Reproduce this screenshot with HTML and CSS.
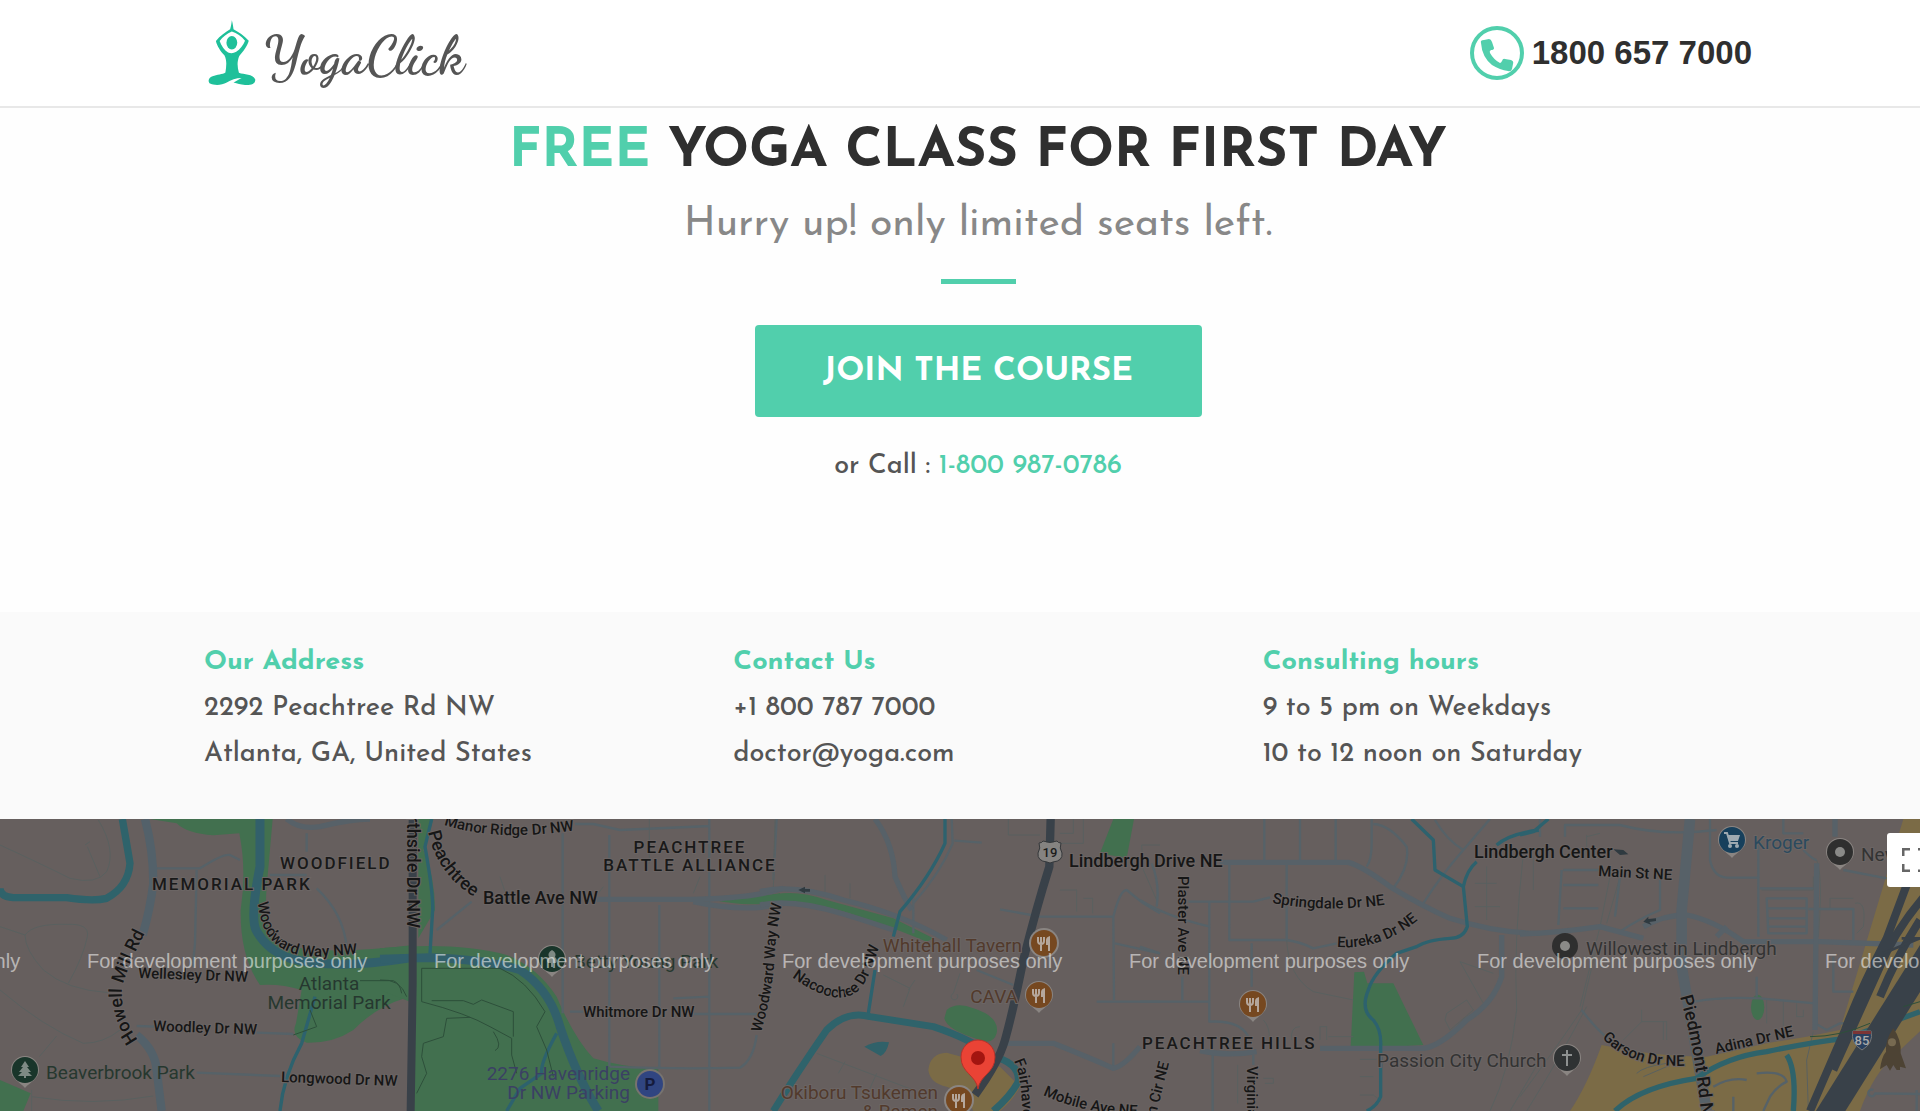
FILE: index.html
```html
<!DOCTYPE html>
<html lang="en">
<head>
<meta charset="utf-8">
<meta name="viewport" content="width=device-width, initial-scale=1">
<title>YogaClick</title>
<link rel="stylesheet" href="styles.css">
</head>
<body>
<div class="page">
  <header class="site-header">
    <div class="container header-row">
      <a class="logo" href="#" aria-label="YogaClick">
        <svg class="logo-mark" viewBox="56 60 141 195" aria-hidden="true">
          <path fill="#1fc09a" fill-rule="evenodd" d="M126 61 C129 72 130 80 131 87 C145 95 163 106 176 121 C172 137 159 153 148 166 C141 182 142 200 147 216 C162 222 188 219 195 235 C197 250 181 253 165 252 C151 252 143 247 131 245 C138 240 148 235 155 231 C139 231 123 237 111 245 C95 254 73 254 60 247 C54 239 59 229 69 226 C82 221 99 221 107 215 C110 197 112 179 104 164 C93 153 82 137 79 122 C91 106 108 95 121 87 C124 77 125 70 126 61 Z M126 94 C112 100 99 110 90 122 C95 136 104 149 115 156 Q127 161 139 154 C150 146 160 135 165 121 C154 108 141 99 126 94 Z"/>
          <ellipse cx="126" cy="127" rx="16" ry="20" fill="#1fc09a"/>
        </svg>
        <span class="logo-text">YogaClick</span>
      </a>
      <a class="phone" href="tel:18006577000">
        <svg class="phone-icon" viewBox="0 0 54 54" aria-hidden="true">
          <circle cx="27" cy="27" r="25" fill="none" stroke="#51cfac" stroke-width="4"/>
          <path fill="#51cfac" d="M11 17 Q10 14 14 14 L19 13 Q21 13 22 16 L24 22 Q24 24 21 24 Q19 25 20 27 Q24 34 30 37 Q31 37 32 35 Q33 32 35 33 L41 34 Q44 35 43 38 L42 43 Q41 46 38 45 Q30 44 22 39 Q12 31 11 17 Z"/>
        </svg>
        <span>1800 657 7000</span>
      </a>
    </div>
  </header>

  <main>
    <section class="offer">
      <h1 class="offer-title"><span class="accent">FREE</span> YOGA CLASS FOR FIRST DAY</h1>
      <p class="offer-sub">Hurry up! only limited seats left.</p>
      <div class="divider"></div>
      <button class="join" type="button">JOIN THE COURSE</button>
      <p class="offer-call">or Call : <a class="accent" href="tel:18009870786">1-800 987-0786</a></p>
    </section>

    <section class="info">
      <div class="container info-grid">
        <div><h2 class="info-title">Our Address</h2><p>2292 Peachtree Rd NW</p><p>Atlanta, GA, United States</p></div>
        <div><h2 class="info-title">Contact Us</h2><p>+1 800 787 7000</p><p>doctor@yoga.com</p></div>
        <div><h2 class="info-title">Consulting hours</h2><p>9 to 5 pm on Weekdays</p><p>10 to 12 noon on Saturday</p></div>
      </div>
    </section>

    <section class="map" aria-label="Map">
      <svg class="map-canvas" role="img" aria-label="Street map around Peachtree Road">
        <defs>
          <path id="c-howell" d="M138 221 Q120 196 122 168 Q128 146 149 106"/>
          <path id="c-woodward" d="M258 83 Q262 142 326 137 L374 134"/>
          <path id="c-manor" d="M444 6 Q500 24 582 10"/>
          <path id="c-peach" d="M428 13 Q439 64 490 86"/>
          <path id="c-wood2" d="M761 214 Q774 168 775 132 Q776 110 784 76"/>
          <path id="c-naco" d="M792 158 Q830 186 852 176 Q870 168 883 112"/>
          <path id="c-fair" d="M1014 242 Q1024 262 1022 320"/>
          <path id="c-mobile" d="M1043 276 Q1085 296 1150 297"/>
          <path id="c-spring" d="M1272 84 Q1330 95 1396 84"/>
          <path id="c-eureka" d="M1337 128 Q1390 132 1432 88"/>
          <path id="c-garson" d="M1602 219 Q1634 252 1694 246"/>
          <path id="c-pied" d="M1680 178 Q1698 240 1703 320"/>
          <g id="pin-drop"><path fill="#8a8582" d="M-14 0 A14 14 0 1 1 14 0 C14 9 5 12 0 18 C-5 12 -14 9 -14 0Z"/></g>
          <g id="fork"><path fill="none" stroke="#b5a79c" stroke-width="2" d="M-6 -6 V-2 Q-6 1 -3 1 Q0 1 0 -2 V-6 M-3 -6 V8"/><path fill="#b5a79c" d="M6 8 H4 V2 H2 V-3 Q2 -6 6 -7Z"/></g>
        </defs>

        <!-- parks and commercial areas -->
        <g transform="translate(0 -9) scale(.33333)">
          <path class="park" d="M450 27 H818 L800 230 Q790 360 830 400 Q960 440 1240 405 L1240 480 L1210 566 Q1130 590 1060 660 Q1000 700 920 698 Q870 680 888 640 L905 540 Q840 520 780 525 Q720 440 722 300 Q740 180 718 70 L640 76 Q560 70 530 40 Z M0 810 L92 850 L70 903 H0Z"/>
        </g>
        <g transform="translate(380 -9) scale(.33333)">
          <path class="park" d="M115 27 H160 L130 120 Q165 200 165 300 L115 385Z M0 415 Q230 395 380 435 Q470 470 530 560 Q580 680 640 745 Q720 770 835 778 V903 H90 V575 L0 540Z M1000 270 Q1100 265 1200 250 L1200 275 Q1100 292 1000 270Z"/>
        </g>
        <g transform="translate(760 -9) scale(.33333)">
          <path class="park" d="M0 265 Q90 230 200 270 L400 325 L520 385 L500 395 Q380 345 300 320 Q130 260 0 280Z M1060 27 H1122 L1100 145 L1020 130Z M560 600 Q590 575 640 595 Q720 620 710 670 Q700 705 660 690 Q560 660 553 625Z"/>
          <path class="shop" d="M505 780 Q510 730 560 728 L640 750 L720 770 L780 830 Q760 870 720 903 L640 903 Q620 850 560 830 Q510 820 505 780Z"/>
          <path fill="#306169" d="M313 710 Q350 690 387 697 Q380 730 362 738Z"/>
        </g>
        <g transform="translate(1140 -9) scale(.33333)">
          <path class="park" d="M643 487 L672 485 L682 520 H760 L850 705 L740 712 L632 710Z"/>
        </g>
        <g transform="translate(1520 -9) scale(.33333)">
          <path class="shop" d="M245 705 Q400 740 560 740 L740 700 L860 680 L960 660 L1150 27 H1310 V560 L1130 730 Q1060 790 1020 903 H150 Q200 830 245 705Z"/>
          <ellipse class="park" cx="713" cy="592" rx="20" ry="38"/>
        </g>

        <!-- streets, waterways and highways -->
        <g transform="translate(0 -9) scale(.33333)">
          <path class="thin" d="M0 105 Q120 160 210 205 Q290 225 320 185 Q350 120 295 30 M255 105 L270 95 M262 110 L300 200 M75 375 Q100 340 200 343 Q270 340 262 380 Q250 440 205 520 M75 375 Q75 420 130 480 Q200 540 325 548 M0 350 L75 375 M0 540 Q130 650 250 700 Q310 700 360 660 M118 740 L170 678 M95 860 Q280 890 460 858 M95 840 V903"/>
          <path class="road" d="M470 175 H600 Q670 130 690 135 L720 150 M590 180 L585 400 L578 470 M920 70 V125 M920 195 H810 M950 235 Q1030 310 1040 410 M770 668 L880 672 M590 788 L840 798 M410 648 L470 650"/>
          <path class="road2" d="M860 27 Q900 60 960 50 Q1050 27 1110 27"/>
          <path class="main" d="M435 27 Q460 120 460 220 Q450 300 428 375 M410 675 Q465 720 470 780 L485 903"/>
          <path class="river" d="M367 27 Q380 100 390 160 Q385 230 320 265 Q280 275 200 263 H40 Q0 260 0 235" stroke-width="22"/>
          <path class="river deep" d="M780 27 V170 Q750 320 768 360 Q800 420 870 445 Q1000 480 1220 445" stroke-width="27"/>
          <path class="creek" d="M840 903 Q850 800 905 700 L945 560"/>
          <path class="trail" d="M1080 512 H1180 Q1200 520 1205 550 M930 600 L950 650 L880 675"/>
        </g>
        <g transform="translate(380 -9) scale(.33333)">
          <path class="road" d="M548 70 L548 610 M688 75 V770 M838 285 V775 M988 27 V903 M170 360 L275 275 M585 42 H640 L720 60 L990 48 M570 605 H610 M940 612 H1140 M690 770 Q900 778 1080 773 Q1120 750 1130 675 M880 565 L988 560 M1190 27 L1180 210"/>
          <path class="thin" d="M360 200 L375 245 M655 250 L670 230 M960 200 L940 250 M808 27 V160"/>
          <path class="road2" d="M650 268 H930 Q1120 265 1210 235 M940 275 Q1100 310 1210 280" stroke-width="15"/>
          <path class="creek" d="M155 27 L135 110 Q160 250 158 300 L150 430" />
          <path class="river deep" d="M0 447 L150 443 Q330 450 420 480 Q510 540 540 650 Q590 800 655 903" stroke-width="26"/>
          <path class="creek" d="M530 670 Q480 760 485 790 L420 835 L380 903 M1200 870 L1180 903"/>
          <path class="trail" d="M125 475 H360 Q440 510 495 605 L470 650 L500 720 L520 800 M125 475 V575 Q260 610 330 650 L395 685 V735 L410 790 M155 572 H250 L280 583 L305 570 L400 605 V680 M270 622 L200 625 L190 680 L130 700 L125 740 L140 790 L110 850 M340 665 Q370 710 345 722 M0 510 Q60 505 80 560"/>
          <path class="highway" d="M98 27 V520 L92 903" stroke-width="24"/>
        </g>
        <g transform="translate(760 -9) scale(.33333)">
          <path class="thin" d="M195 195 V245 M270 220 V265 M45 30 L40 240 M600 490 L580 550 A10 10 0 1 0 590 552 M370 495 L450 535 L430 590 M465 510 L445 540 M170 730 L460 840 M255 755 L235 790 M350 790 L330 835 M745 27 V75 H840 M870 100 H970 V27 M900 70 H940 V27 M900 240 H950 V305 M970 265 H998 V310 M1200 105 H1145 L1150 180 L1190 270"/>
          <path class="road" d="M575 27 L578 100 Q540 190 460 280 M583 92 L665 98 M720 298 L840 320 H1060 M1060 320 Q1080 240 1100 240 L1150 280 L1200 310 M1060 320 L1062 570 M1010 575 H1200 M1065 400 L1200 430 M460 250 V370 M650 480 L760 525 M1060 700 V775"/>
          <path class="road2" d="M345 27 Q400 100 405 200 Q440 280 455 300 M0 245 Q100 220 250 270 Q420 310 560 390 M0 285 Q100 265 250 312 Q310 330 400 360 M730 700 H880 Q980 740 1060 775 Q1090 770 1140 710" stroke-width="17"/>
          <path class="creek" d="M555 27 V100 Q510 200 420 305 L400 380 M345 480 L325 610"/>
          <path class="river" d="M40 903 Q110 790 200 660 Q260 600 330 620 L520 650 Q640 690 700 740 Q780 760 775 815 Q750 860 700 903" stroke-width="21"/>
          <path class="highway" d="M872 27 L868 170 Q830 290 790 450 Q760 600 735 690 Q715 760 645 855" stroke-width="25"/>
          <path fill="#2f3a40" d="M115 240 L135 230 V237 H150 V245 H135 V250Z"/>
        </g>
        <g transform="translate(1140 -9) scale(.33333)">
          <path class="road" d="M373 27 V155 M480 27 V155 M587 27 V150 M695 27 V100 Q695 150 680 170 M268 160 V390 H440 Q480 395 520 415 L590 400 M440 165 V395 M145 275 H340 L390 262 M0 270 Q80 320 210 350 M208 275 V635 Q300 630 325 680 M0 575 H205 M127 500 V570 M335 400 V530 M35 160 Q60 220 50 290 M218 735 V903 M340 735 V765 M700 42 Q750 45 800 110 Q810 170 760 235 M885 30 Q920 90 970 120 M1050 27 L970 120 Q900 200 850 280 M0 410 L60 430"/>
          <path class="thin" d="M440 390 Q445 500 520 545 L640 570 M293 765 V880 M370 630 Q390 650 388 690 M455 690 Q450 650 480 650 M540 690 V650 H560 V690 M565 680 H640 M370 805 H400 V820 H375 M660 748 H710 M660 800 H700 M660 855 H700 L720 870 M1150 130 Q1120 400 1130 600 Q1110 780 1050 903 M1200 750 L1110 903 M960 455 L1060 490 M960 455 L1030 580 M915 630 L920 610 L980 570 L1000 600 L930 660Z M1040 170 V330 M1005 220 H1070 M1005 290 H1080"/>
          <path class="road2" d="M240 157 H625 Q670 170 750 230 Q850 290 930 325 Q1070 370 1200 370" stroke-width="19"/>
          <path class="road2" d="M1085 375 V500 Q1060 580 980 630 Q900 710 850 715 H540 M180 722 Q260 740 350 725" stroke-width="15"/>
          <path class="creek" d="M815 27 L880 90 L885 180 L970 230 L982 350 Q970 385 930 385 Q860 390 830 410 L770 430 Q700 490 685 540 Q660 600 700 630 Q725 660 722 710 V860 Q710 890 680 903 M970 230 Q980 180 1010 155 M1070 105 Q1110 70 1200 60"/>
        </g>
        <g transform="translate(1520 -9) scale(.33333)">
          <path class="thin" d="M200 80 L240 70 M200 130 V75 M40 140 V240 M270 200 L240 350 L180 590 M300 200 L260 340 M230 410 L185 600 Q90 740 0 860 M200 590 Q110 760 20 903 M880 200 V240 H725 M1000 265 H930 V300 M1005 280 Q1040 270 1030 350 L1010 370 M365 635 H440 V690 M310 690 L365 635 V600 M430 635 V690 M740 570 V640 M790 575 V650 M830 580 V620 H850 V600 M350 790 Q370 770 440 760 M370 800 L440 770 M880 665 L860 750 L865 900 M890 150 Q910 200 895 380"/>
          <path class="road" d="M135 80 V45 H300 Q430 80 590 60 M130 180 H240 M130 225 H235 M130 295 H235 M125 180 L115 345 M300 200 L285 320 M420 210 V300 Q350 330 300 365 M570 27 V150 Q580 200 620 203 H715 M715 100 V380 M720 235 H880 M740 265 H860 V370 H745Z M740 295 H860 M740 325 H860 M740 350 H860 M865 297 H1000 V390 M790 27 V70 H850 M850 120 Q880 150 890 150 M970 180 L1100 205 M890 270 V640 M525 575 Q600 560 720 565 L885 580 M710 500 V560 M185 600 Q230 660 270 690 M885 640 L920 660 L960 640 H990 M940 440 V545 H1000 M60 28 V80 M580 830 Q630 800 680 810 M640 860 L640 903 M710 790 Q790 780 800 815 Q770 830 750 860 L730 903 M1060 840 A10 10 0 1 0 1065 850 L1200 852 M1190 840 V903"/>
          <path class="road2" d="M0 372 Q100 370 240 350 L370 385 M370 350 Q430 315 500 315 Q580 330 670 395 H900 L1180 405" stroke-width="24"/>
          <path class="road2 wide" d="M510 27 L485 300 V470 L560 903"/>
          <path class="road2" d="M890 160 L885 660 M945 27 V80 M590 380 L620 350" stroke-width="14"/>
          <path class="river" d="M285 903 Q360 830 530 805 Q620 740 740 725 Q880 695 980 685 L1200 605 M800 735 Q830 780 820 903" stroke-width="16"/>
          <path class="creek" d="M0 75 L40 65 L85 27"/>
          <path class="highway" d="M1310 300 L915 930" stroke-width="75"/>
          <path class="highway" d="M1160 225 L1100 385 Q1020 540 975 660 L870 903 M1230 240 Q1130 350 1080 470 L940 780 M1200 330 Q1130 440 1080 560" stroke-width="24"/>
          <path class="highway" d="M1145 385 H1200 L1090 430" stroke-width="8"/>
          <path class="trail" d="M870 680 Q960 680 1050 640 M1150 590 L1200 575" />
          <path fill="#2f3a40" d="M370 335 L385 320 V327 L408 325 V333 L388 336 L395 345Z M280 118 L310 120 L325 133 L300 135Z"/>
          <path fill="#4d4334" d="M1120 655 Q1145 690 1142 730 L1158 775 L1140 770 V780 H1130 L1120 765 L1110 782 L1100 765 L1080 778 Q1085 740 1098 725 Q1095 690 1120 655Z"/>
          <circle cx="1116" cy="697" r="12" fill="#776a51"/>
        </g>

        <!-- place and street names -->
        <g class="area">
          <text x="280" y="50">WOODFIELD</text><text x="152" y="71">MEMORIAL PARK</text>
          <text x="690" y="34" text-anchor="middle">PEACHTREE</text><text x="690" y="52" text-anchor="middle">BATTLE ALLIANCE</text>
          <text x="1142" y="230">PEACHTREE HILLS</text>
        </g>
        <g class="street">
          <text transform="translate(138 159) rotate(2)">Wellesley Dr NW</text>
          <text transform="translate(153 212) rotate(2)">Woodley Dr NW</text>
          <text transform="translate(281 263) rotate(2)">Longwood Dr NW</text>
          <text x="583" y="198">Whitmore Dr NW</text>
          <text transform="translate(1598 57) rotate(3)">Main St NE</text>
          <text transform="translate(1716 235) rotate(-13)">Adina Dr NE</text>
          <text transform="translate(1178 57) rotate(90)">Plaster Ave NE</text>
          <text transform="translate(1247 247) rotate(90)">Virginia Pl NE</text>
          <text transform="translate(1169 244) rotate(-76)" text-anchor="end">Burton Cir NE</text>
          <text><textPath href="#c-woodward">Woodward Way NW</textPath></text>
          <text><textPath href="#c-manor">Manor Ridge Dr NW</textPath></text>
          <text><textPath href="#c-wood2">Woodward Way NW</textPath></text>
          <text><textPath href="#c-naco">Nacoochee Dr NW</textPath></text>
          <text><textPath href="#c-fair">Fairhaven</textPath></text>
          <text><textPath href="#c-mobile">Mobile Ave NE</textPath></text>
          <text><textPath href="#c-spring">Springdale Dr NE</textPath></text>
          <text><textPath href="#c-eureka">Eureka Dr NE</textPath></text>
          <text><textPath href="#c-garson">Garson Dr NE</textPath></text>
        </g>
        <g class="street big">
          <text><textPath href="#c-howell">Howell Mill Rd</textPath></text>
          <text transform="translate(407 109) rotate(90)" text-anchor="end">Northside Dr NW</text>
          <text><textPath href="#c-peach">Peachtree</textPath></text>
          <text x="483" y="85">Battle Ave NW</text>
          <text x="1069" y="48">Lindbergh Drive NE</text>
          <text x="1474" y="39">Lindbergh Center</text>
          <text><textPath href="#c-pied">Piedmont Rd NE</textPath></text>
        </g>
        <g class="poi">
          <g class="green"><text x="329" y="171" text-anchor="middle">Atlanta</text><text x="329" y="190" text-anchor="middle">Memorial Park</text><text x="46" y="260">Beaverbrook Park</text><text x="574" y="149">Betty Young Park</text></g>
          <g class="violet" text-anchor="end"><text x="630" y="261">2276 Havenridge</text><text x="630" y="280">Dr NW Parking</text></g>
          <g class="brown" text-anchor="end"><text x="1022" y="133">Whitehall Tavern</text><text x="1018" y="184">CAVA</text><text x="938" y="280">Okiboru Tsukemen</text><text x="938" y="299">&amp; Ramen</text></g>
          <g class="grey"><text x="1377" y="248">Passion City Church</text><text x="1586" y="136">Willowest in Lindbergh</text><text x="1861" y="42">New</text></g>
          <text class="blue" x="1753" y="30">Kroger</text>
        </g>

        <!-- place markers -->
        <g transform="translate(25 251)"><use href="#pin-drop"/><circle r="13" fill="#19352a"/><path fill="#7e8a84" d="M0 -9 L4 -3 H2 L6 2 H3 L7 6 H1 V8 H-1 V6 H-7 L-3 2 H-6 L-2 -3 H-4Z"/></g>
        <g transform="translate(552 140)"><use href="#pin-drop"/><circle r="13" fill="#19352a"/><path fill="#7e8a84" d="M0 -9 Q5 -6 3 -2 Q6 1 4 4 H1 V8 H-1 V4 H-4 Q-6 1 -3 -2 Q-5 -6 0 -9Z"/></g>
        <g transform="translate(650 265)"><circle r="15" fill="#77736f"/><circle r="13" fill="#304581"/><text class="parking" y="6" text-anchor="middle">P</text></g>
        <g transform="translate(1044 124)"><circle r="15" fill="#8a8582"/><circle r="13" fill="#764820"/><use href="#fork"/></g>
        <g transform="translate(1039 176)"><use href="#pin-drop"/><circle r="13" fill="#764820"/><use href="#fork"/></g>
        <g transform="translate(1253 185)"><use href="#pin-drop"/><circle r="13" fill="#764820"/><use href="#fork"/></g>
        <g transform="translate(959 281)"><circle r="15" fill="#8a8582"/><circle r="13" fill="#764820"/><use href="#fork"/></g>
        <g transform="translate(1732 21)"><use href="#pin-drop"/><circle r="13" fill="#17405c"/><path fill="none" stroke="#9eaab1" stroke-width="2" d="M-8 -7 H-5 L-2 3 H6"/><path fill="#9eaab1" d="M-5 -5 H8 L6 1 H-3Z"/><circle cx="-2" cy="6" r="2" fill="#9eaab1"/><circle cx="5" cy="6" r="2" fill="#9eaab1"/></g>
        <g transform="translate(1840 33)"><use href="#pin-drop"/><circle r="13" fill="#2f2f2f"/><circle r="5" fill="#8a8a88"/></g>
        <g transform="translate(1565 127)"><circle r="13" fill="#2f2f2f"/><circle r="5" fill="#8a8a88"/></g>
        <g transform="translate(1567 239)"><use href="#pin-drop"/><circle r="13" fill="#2f3233"/><path stroke="#8e9191" stroke-width="2" d="M0 -8 V8 M-5 -3 H5"/></g>
        <g transform="translate(1050 33)"><path fill="#858381" stroke="#35383b" stroke-width="1" d="M-11 -9 Q-8 -9 -7 -11 Q0 -8 7 -11 Q8 -9 11 -9 Q9 -4 12 1 Q13 9 3 10 L0 11 L-3 10 Q-13 9 -12 1 Q-9 -4 -11 -9Z"/><text class="shield dark" y="5" text-anchor="middle">19</text></g>
        <g transform="translate(1862 221)"><path fill="#29405f" stroke="#777" stroke-width="1" d="M-9 -9 H9 Q12 3 0 10 Q-12 3 -9 -9Z"/><path fill="#7c3535" d="M-9 -9 H9 V-6 H-9Z"/><text class="shield" y="5" text-anchor="middle">85</text></g>
        <g transform="translate(978 239)"><path fill="#ea4335" stroke="#b5322a" stroke-width="1" d="M0 31 C-2 17 -17 15 -17 -1 A17 17 0 0 1 17 -1 C17 15 2 17 0 31Z"/><circle r="7" fill="#a31510"/></g>

        <g class="watermark">
          <text x="-260" y="149">For development purposes only</text><text x="87" y="149">For development purposes only</text><text x="434" y="149">For development purposes only</text><text x="782" y="149">For development purposes only</text><text x="1129" y="149">For development purposes only</text><text x="1477" y="149">For development purposes only</text><text x="1825" y="149">For development purposes only</text>
        </g>
      </svg>
      <button class="fullscreen" type="button" aria-label="Toggle fullscreen view">
        <svg viewBox="0 0 24 24" aria-hidden="true"><path fill="none" stroke="#666" stroke-width="3" d="M1 8 V1 H8 M16 1 H23 V8 M23 16 V23 H16 M8 23 H1 V16"/></svg>
      </button>
    </section>
  </main>
</div>
</body>
</html>
```
FILE: styles.css
```css
* { box-sizing: border-box; }

html { overflow: hidden; }

body {
  margin: 0;
  overflow: hidden;
  background: #fefefe;
  color: #555;
  font-family: "Josefin Sans", Lato, sans-serif;
  font-size: 27px;
  line-height: 46px;
}

h1, h2, p { margin: 0; }

/* The page runs slightly past the right edge of the window. */
.page {
  width: calc(100% + 36px);
  min-height: 100vh;
  display: flex;
  flex-direction: column;
}

.container {
  width: 80%;
  max-width: 1548px;
  margin: 0 auto;
}

@media (min-width: 1200px) {
  .container { width: calc(100% - 408px); }
}

.accent { color: #51cfac; text-decoration: none; }

.site-header {
  background: #fff;
  border-bottom: 2px solid #e8e8e8;
}

.header-row {
  height: 106px;
  display: flex;
  align-items: center;
  justify-content: space-between;
}

.logo {
  display: flex;
  align-items: center;
  gap: 8px;
  padding-left: 4px;
  color: #555;
  text-decoration: none;
}

.logo-mark { width: 48px; height: 66px; }

.logo-text {
  padding-top: 6px;
  font-family: "Dancing Script", "Liberation Serif", serif;
  font-size: 54px;
  font-weight: 700;
}

.phone {
  display: flex;
  align-items: center;
  gap: 8px;
  color: #2f2f2f;
  font: bold 33px "Liberation Sans", Arial, sans-serif;
  text-decoration: none;
}

.phone-icon { width: 54px; height: 54px; }

.offer {
  display: flex;
  flex-direction: column;
  align-items: center;
  padding-bottom: 122px;
  text-align: center;
}

.offer-title {
  padding-top: 10px;
  color: #2f2f2f;
  font-size: 54px;
  font-weight: 700;
  line-height: 70px;
}

.offer-sub {
  margin-top: 10px;
  color: #888;
  font-size: 41px;
  line-height: 54px;
}

.divider {
  width: 75px;
  height: 5px;
  margin: 27px 0 41px;
  background: #51cfac;
}

.join {
  width: 447px;
  height: 92px;
  border: 0;
  border-radius: 4px;
  background: #51cfac;
  color: #fff;
  font: 700 33px "Josefin Sans", Lato, sans-serif;
}

.offer-call { margin-top: 27px; font-weight: 500; }

.info {
  padding: 28px 0 41px;
  background: #fafafa;
  font-weight: 500;
}

.info-grid {
  display: grid;
  grid-template-columns: repeat(3, 1fr);
  column-gap: 40px;
}

.info-title {
  color: #51cfac;
  font-size: 27px;
  font-weight: 700;
  line-height: 46px;
}

.map {
  position: relative;
  height: 292px;
  overflow: hidden;
  background: #665f5e;
}

.map-canvas { display: block; width: 100%; height: 100%; }

.map-canvas text { font-family: Roboto, Arial, sans-serif; }

.park { fill: #42704f; }
.shop { fill: #7b6b46; }

.thin, .road, .road2, .main, .river, .creek, .trail, .highway { fill: none; stroke-linejoin: round; }
.thin { stroke: #59605f; stroke-width: 3; }
.road { stroke: #566268; stroke-width: 7; }
.road2 { stroke: #576168; stroke-width: 16; }
.wide { stroke-width: 32; }
.main { stroke: #53616a; stroke-width: 25; }
.river { stroke: #2f636b; }
.deep { stroke: #32606b; }
.creek { stroke: #2d626e; stroke-width: 10; }
.trail { stroke: #2d4f3a; stroke-width: 3; }
.highway { stroke: #394149; }

.area text, .street text, .poi text {
  paint-order: stroke;
  stroke: #6b6564;
  stroke-width: 2px;
}

.area text { font-size: 17px; font-weight: 500; letter-spacing: 2px; fill: #191919; }
.street text { font-size: 15px; font-weight: 500; fill: #161616; }
.big text { font-size: 18px; }
.poi text { font-size: 19px; }
.green { fill: #26382f; }
.violet { fill: #3b4064; }
.brown { fill: #523a2c; }
.grey { fill: #333; }
.blue { fill: #2b4a5e; }
.map-canvas .violet text, .map-canvas .green text { stroke: none; }

.parking { font-size: 17px; font-weight: 700; fill: #151b3c; }
.shield { font-size: 13px; font-weight: 500; fill: #aaa; }
.dark { fill: #1c1c1c; }

.map-canvas .watermark text {
  font-family: "Liberation Sans", Arial, sans-serif;
  font-size: 20px;
  fill: rgba(255, 255, 255, .55);
}

.fullscreen {
  position: absolute;
  top: 14px;
  right: 15px;
  display: grid;
  place-items: center;
  width: 54px;
  height: 54px;
  padding: 0;
  border: 0;
  border-radius: 3px;
  background: #fff;
}

.fullscreen svg { width: 24px; height: 24px; }
```
